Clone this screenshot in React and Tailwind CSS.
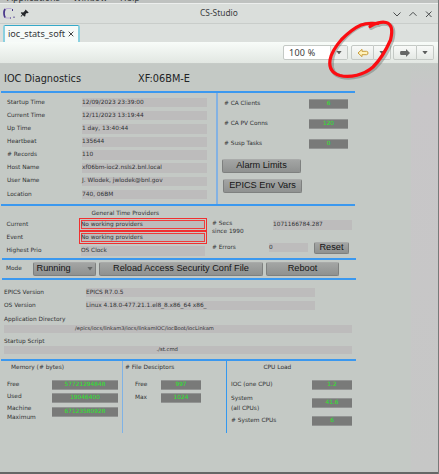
import React from "react";

const info = [
  ["Startup Time", "12/09/2023 23:39:00"],
  ["Current Time", "12/11/2023 13:19:44"],
  ["Up Time", "1 day, 13:40:44"],
  ["Heartbeat", "135644"],
  ["# Records", "110"],
  ["Host Name", "xf06bm-ioc2.nsls2.bnl.local"],
  ["User Name", "J. Wlodek, jwlodek@bnl.gov"],
  ["Location", "740, 06BM"],
];

const clients = [
  ["# CA Clients", "6"],
  ["# CA PV Conns", "120"],
  ["# Susp Tasks", "0"],
];

function Field({ className = "h-[9.5px]", children }) {
  return (
    <div className={"flex shrink-0 items-center bg-[#bdbcbc] " + className}>{children}</div>
  );
}

function Led({ className = "", children }) {
  return (
    <div
      className={
        "flex h-[10px] shrink-0 items-center justify-center border-y border-[#929493] bg-[#797a79] text-[#2ce62c] " +
        className
      }
    >
      {children}
    </div>
  );
}

function Button({ className = "", children }) {
  return (
    <button
      className={
        "flex shrink-0 items-center justify-center rounded-[2px] border border-[#7e807f] border-t-[#a9abaa] bg-linear-to-b from-[#a3a5a4] to-[#8f9190] font-['Liberation_Sans',sans-serif] text-[9.200px] leading-none text-[#151515] " +
        className
      }
    >
      {children}
    </button>
  );
}

function Caret({ className = "" }) {
  return (
    <svg viewBox="0 0 6 4" className={"h-[3.5px] w-[6px] shrink-0 " + className}>
      <path d="M0 0h6L3 4z" fill="currentColor" />
    </svg>
  );
}

function Rule({ className = "" }) {
  return <div className={"h-[2px] shrink-0 bg-[#3b98ef] " + className} />;
}

function TitleBar() {
  return (
    <div className="flex h-[20px] shrink-0 items-center justify-between border-t border-[#eceeed] bg-[#dadedb] pr-[5px] pl-[2px] text-[#3b3d3e]">
      <div className="flex items-center">
        <svg viewBox="0 0 28 18" className="h-[18px] w-[28px] shrink-0">
          <path d="M9.500 3.500H5Q2 4 2 7V10Q2 13 5 13H9" fill="none" stroke="#b9acd4" strokeWidth="1.200" />
          <path d="M3 4Q1 8 3 12.500" fill="none" stroke="#493889" strokeWidth="1.700" />
          <path d="M10.500 4v2M12 11.500v1.500M8 13h1" stroke="#493889" strokeWidth="1" />
          <path d="M23.500 4.500l3.200 3-1 .8-1-.2-1.200 1.200-.2 2-1 .3-1.500-1.600-1.600 1.700-.6-.5 1.600-1.600-1.400-1.500.4-.8 2 .1 1.600-1.400z" fill="#24272a" />
        </svg>
        <span className="pl-[170px] font-['Noto_Sans',sans-serif] text-[8.400px] leading-none">CS-Studio</span>
      </div>
      <svg viewBox="0 0 46 12" className="h-[12px] w-[46px] shrink-0" fill="none" stroke="#4a4d4e" strokeWidth="1">
        <path d="M6.500 4.500l3.500 3.500L13.500 4.500M22.500 7.800L26 4.300l3.500 3.500M39 3.500l5.500 5.500M44.500 3.500L39 9" />
      </svg>
    </div>
  );
}

function ToolBar() {
  const box = "flex h-[15px] items-center justify-center border border-[#c4c9c5] bg-linear-to-b from-[#f8faf8] to-[#e5e9e5] ";
  return (
    <div className="flex h-[22px] shrink-0 items-center justify-end border-b border-[#c6cbc7] bg-linear-to-b from-[#f8fcf9] to-[#e2e7e2] pr-[4px] text-[#5c5e5d]">
      <div className="flex h-[15px] w-[65px] items-center justify-between rounded-[2px] border border-[#c4c9c5] bg-white font-['Noto_Sans',sans-serif] text-[9px] leading-none text-[#393b3c]">
        <span className="pl-[5px] tracking-[0.25px]">100 %</span>
        <span className="flex h-full w-[17px] items-center justify-center border-l border-[#d8dcd9] bg-[#eceeec] text-[#5c5e5d]"><Caret /></span>
      </div>
      <div className={box + "ml-[3px] w-[23px] rounded-l-[2px]"}>
        <svg viewBox="0 0 12 10" className="h-[10px] w-[12px]">
          <path d="M1 5l4-3.700v2h4.500Q11 3.300 11 5t-1.500 1.700H5v2z" fill="#fff2ba" stroke="#c99d3b" strokeWidth="1" />
        </svg>
      </div>
      <div className={box + "w-[17px] rounded-r-[2px] border-l-0"}><Caret /></div>
      <div className={box + "ml-[2px] w-[24px] rounded-l-[2px]"}>
        <svg viewBox="0 0 12 10" className="h-[10px] w-[12px]">
          <path d="M11 5L7 .9v2H2Q1 2.900 1 5t1 2.100h5v2z" fill="#666867" />
        </svg>
      </div>
      <div className={box + "w-[17px] rounded-r-[2px] border-l-0"}><Caret /></div>
    </div>
  );
}

function GeneralInfo() {
  return (
    <div className="flex h-[111px] shrink-0">
      <div className="flex w-[215px] flex-col pt-[3px] pl-[6px]">
        {info.map(([label, value]) => (
          <div key={label} className="flex h-[13.130px] items-center">
            <span className="w-[75px]">{label}</span>
            <Field className="h-[9.500px] w-[125px]">{value}</Field>
          </div>
        ))}
      </div>
      <div className="w-[2px] bg-[#84b2e2]" />
      <div className="flex flex-col pt-[1.500px] pl-[6px]">
        {clients.map(([label, value]) => (
          <div key={label} className="flex h-[19.700px] items-center">
            <span className="w-[85px] text-[5.800px]">{label}</span>
            <Led className="w-[39px]">{value}</Led>
          </div>
        ))}
        <Button className="mt-[5.500px] ml-[-2px] h-[14px] w-[79px]">Alarm Limits</Button>
        <Button className="mt-[5.500px] ml-[-1px] h-[14px] w-[79px]">EPICS Env Vars</Button>
      </div>
    </div>
  );
}

function TimeProviders() {
  return (
    <div className="flex h-[52px] shrink-0 text-[5.800px]">
      <div className="w-[211px] pl-[5.500px]">
        <div className="flex h-[12px] items-center pt-[3px] pl-[85px]">General Time Providers</div>
        {["Current", "Event"].map((label) => (
          <div key={label} className="flex h-[13.200px] items-center">
            <span className="w-[72.500px]">{label}</span>
            <div className="h-[13.200px] w-[128px] border border-[#f03030] p-px">
              <div className="flex h-full items-center border border-[#ef3b3b] bg-[#bdbcbc]">
                <span className="ml-[-1px]">No working providers</span>
              </div>
            </div>
          </div>
        ))}
        <div className="flex h-[13px] items-center">
          <span className="w-[74.500px]">Highest Prio</span>
          <Field className="h-[9.500px] w-[124px]">OS Clock</Field>
        </div>
      </div>
      <div className="w-[142px]">
        <div className="flex h-[34px] items-start pt-[12.500px]">
          <span className="w-[61px] leading-[8px]"># Secs<br />since 1990</span>
          <Field className="mt-[1.500px] h-[9.500px] w-[79px]">1071166784.287</Field>
        </div>
        <div className="flex h-[15px] items-center">
          <span className="w-[57px]"># Errors</span>
          <Field className="h-[9.500px] w-[39px]">0</Field>
          <Button className="ml-[6px] h-[12px] w-[35px]">Reset</Button>
        </div>
      </div>
    </div>
  );
}

function Versions() {
  return (
    <div className="flex h-[79px] shrink-0 flex-col pt-[6px] pl-[3px] text-[5.850px]">
      <div className="flex h-[13px] items-center">
        <span className="w-[82px]">EPICS Version</span>
        <Field className="h-[9.500px] w-[229px]">EPICS R7.0.5</Field>
      </div>
      <div className="flex h-[13px] items-center">
        <span className="w-[82px]">OS Version</span>
        <Field className="h-[9.500px] w-[229px]">Linux 4.18.0-477.21.1.el8_8.x86_64 x86_</Field>
      </div>
      <div className="flex h-[12px] items-center pt-[4px]">Application Directory</div>
      <Field className="mt-[0.500px] h-[8.500px] w-[348px] pl-[71px] text-[5.200px]">/epics/iocs/linkam3/iocs/linkamIOC/iocBoot/iocLinkam</Field>
      <div className="flex h-[13px] items-center pt-[4px]">Startup Script</div>
      <Field className="h-[8px] w-[348px] pl-[152.500px] text-[5.300px]">./st.cmd</Field>
    </div>
  );
}

function Resources() {
  return (
    <div className="flex h-[72px] shrink-0">
      <div className="w-[121px] pl-[6px]">
        <div className="flex h-[17.500px] pt-[4px] pl-[4px]">Memory (# bytes)</div>
        <div className="flex h-[13px] items-center">
          <span className="w-[45px]">Free</span>
          <Led className="w-[66px]">57721294848</Led>
        </div>
        <div className="flex h-[13px] items-center">
          <span className="mt-[-3px] w-[45px]">Used</span>
          <Led className="w-[66px]">19046400</Led>
        </div>
        <div className="flex h-[15px] items-center">
          <span className="w-[45px] pt-[1px] leading-[8.500px]">Machine<br />Maximum</span>
          <Led className="mt-[-0.500px] w-[66px]">67123580928</Led>
        </div>
      </div>
      <div className="w-px bg-[#7fb2e6]" />
      <div className="w-[103px] pl-[2px]">
        <div className="flex h-[17.500px] pt-[4px]"># File Desciptors</div>
        <div className="flex h-[13px] items-center pl-[10px]">
          <span className="w-[26px]">Free</span>
          <Led className="w-[40px]">997</Led>
        </div>
        <div className="flex h-[13px] items-center pl-[10px]">
          <span className="w-[26px]">Max</span>
          <Led className="w-[40px]">1024</Led>
        </div>
      </div>
      <div className="w-px bg-[#3398f0]" />
      <div className="pl-[4px]">
        <div className="flex h-[17.500px] pt-[4px] pl-[32.500px]">CPU Load</div>
        <div className="flex h-[13px] items-center">
          <span className="w-[81px]">IOC (one CPU)</span>
          <Led className="w-[40px]">1.2</Led>
        </div>
        <div className="flex h-[23px] items-center">
          <span className="w-[81px] pt-[1px] leading-[9.800px]">System<br />(all CPUs)</span>
          <Led className="w-[40px]">41.6</Led>
        </div>
        <div className="flex h-[13px] items-center">
          <span className="w-[81px]"># System CPUs</span>
          <Led className="w-[40px]">6</Led>
        </div>
      </div>
    </div>
  );
}

export default function App() {
  return (
    <div className="relative flex h-[474px] w-[439px] flex-col overflow-hidden border-r border-[#777a79] bg-[#dadedb] font-['DejaVu_Sans',sans-serif] text-[5.850px] leading-none whitespace-nowrap text-[#303234]">
      <div className="flex h-[3px] shrink-0 items-end overflow-hidden bg-[#bfc2c0] pl-[7px] text-[8.700px] text-[#34383a]">
        <span className="w-[66px]">Applications</span>
        <span className="w-[47px]">Window</span>
        <span>Help</span>
      </div>
      <TitleBar />
      <div className="flex h-[19px] shrink-0 items-end border-t border-[#c9cdca] bg-[#dce0dd] pl-[3px]">
        <div className="flex h-[17px] w-[77px] items-center justify-between rounded-t-[2px] border-x-2 border-t border-x-[#8ad0df] border-t-[#36a9c8] bg-[#f6faf8] pr-[4px] pl-[3px] text-[9.150px] text-[#343638]">
          <span className="mt-[-1px] font-['Noto_Sans',sans-serif]">ioc_stats_soft</span>
          <svg viewBox="0 0 6 6" className="mt-[-1px] h-[6px] w-[6px]">
            <path d="M.7.7l4.600 4.600M5.300.7L.7 5.300" stroke="#444" strokeWidth="1" />
          </svg>
        </div>
      </div>
      <ToolBar />
      <div className="flex h-[408px] shrink-0 bg-[#c4c9c5]">
        <div className="flex w-[411px] flex-col pl-px">
          <div className="flex h-[26px] shrink-0 items-center pt-[4px] pl-[3px] text-[9.750px] text-[#222426]">
            <span className="w-[134px]">IOC Diagnostics</span>
            <span>XF:06BM-E</span>
          </div>
          <Rule className="mt-px w-[354px]" />
          <GeneralInfo />
          <Rule className="w-[354px]" />
          <TimeProviders />
          <Rule className="ml-px w-[354px]" />
          <div className="flex h-[18px] shrink-0 items-center pl-[5px]">
            <span className="w-[27px]">Mode</span>
            <Button className="h-[14px] w-[63px]">
              <span className="w-[50px] text-left">Running</span>
              <Caret className="text-[#646665]" />
            </Button>
            <Button className="ml-[3px] h-[14px] w-[164px]">Reload Access Security Conf File</Button>
            <Button className="ml-[3px] h-[14px] w-[73px]">Reboot</Button>
          </div>
          <Rule className="ml-px w-[354px]" />
          <Versions />
          <Rule className="w-[355px]" />
          <Resources />
        </div>
        <div className="flex-1 bg-linear-to-b from-[#c4c9c5] via-[#c8c6c8] via-8% to-[#c6c7c6]" />
      </div>
      <div className="h-[2px] shrink-0 bg-[#656766]" />
      <svg viewBox="0 0 439 474" className="pointer-events-none absolute inset-0 h-[474px] w-[439px]" fill="none" strokeLinecap="round" strokeLinejoin="round">
        <path d="M379 25C373 23 366 23 361 26C354 29 347 35 342 41C335 49 332 56 332 62C331 69 333 75 342 77C352 79 366 76 375 68C383 60 389 49 392 41C395 31 393 25 387 24C383 23 376 25 371 28" stroke="#606864" strokeOpacity=".4" strokeWidth="4" />
        <path d="M378 23.500C372 23 366 23 361 25C354 28 347 34 341.500 39.500C335 47 331 54 330 60C329 67 331 73 340 75.500C350 78 364 75 373 67C381 59 387 48 390.500 40C393 30 392 24 386 22.500C382 21.500 375 23 370 26.500" stroke="#fc0d12" strokeWidth="3.200" />
      </svg>
    </div>
  );
}
